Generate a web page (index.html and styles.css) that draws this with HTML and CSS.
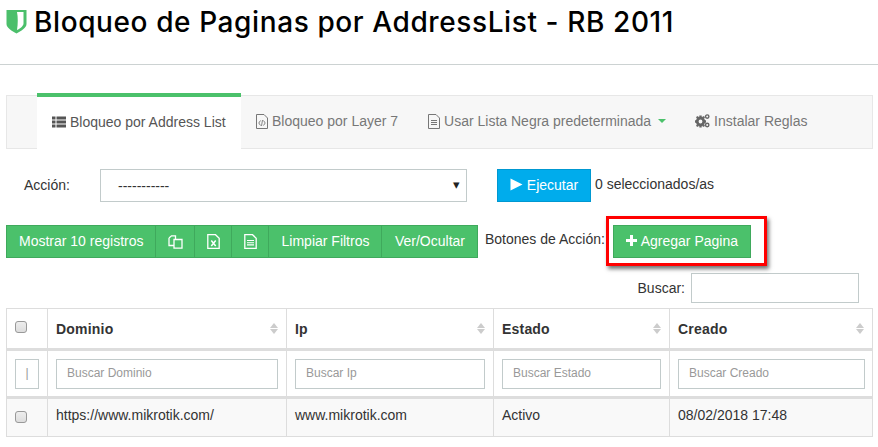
FILE: index.html
```html
<!DOCTYPE html>
<html lang="es">
<head>
  <meta charset="UTF-8">
  <title>Bloqueo de Paginas por AddressList - RB 2011</title>
  <link rel="stylesheet" href="styles.css">
</head>
<body>
  <header class="page-title">
    <svg class="shield" width="21" height="25" viewBox="0 0 21 25">
      <path d="M0.5 1 H20.5 V15 C20.5 19 15 22 10.5 24.5 C6 22 0.5 19 0.5 15 Z" fill="#4bbf6b"/>
      <path d="M11 3 H17.5 V14.5 C17.5 17 14 19.5 11 21 C12 15 12 8 11 3 Z" fill="#fff"/>
    </svg>
    <h1>Bloqueo de Paginas por AddressList - RB 2011</h1>
  </header>

  <nav class="tabs">
    <a class="tab tab-active">
      <svg class="icon" width="14" height="12" viewBox="0 0 14 12" fill="#555">
        <path d="M0 0.5h3.5v3H0zM4.5 0.5H14v3H4.5zM0 4.5h3.5v3H0zM4.5 4.5H14v3H4.5zM0 8.5h3.5v3H0zM4.5 8.5H14v3H4.5z"/>
      </svg>
      Bloqueo por Address List
    </a>
    <a class="tab">
      <svg class="icon" width="12" height="15" viewBox="0 0 12 15" fill="none" stroke="#777">
        <path d="M0.5 0.5H8L11.5 4V14.5H0.5Z"/><path d="M4.5 6.5L2.8 9L4.5 11.5M7.5 6.5L9.2 9L7.5 11.5M6.5 6L5.5 12" stroke-width="0.9"/>
      </svg>
      Bloqueo por Layer 7
    </a>
    <a class="tab">
      <svg class="icon" width="12" height="15" viewBox="0 0 12 15" fill="none" stroke="#777">
        <path d="M0.5 0.5H8L11.5 4V14.5H0.5Z"/><path d="M3 6.5H9M3 8.5H9M3 10.5H9"/>
      </svg>
      Usar Lista Negra predeterminada <span class="caret"></span>
    </a>
    <a class="tab tab-last">
      <svg class="icon" width="15" height="14" viewBox="0 0 15 14" fill="#666">
        <circle cx="5.5" cy="7.5" r="3.3" fill="none" stroke="#666" stroke-width="2.8"/>
        <path d="M4.3 1.5h2.4v2.4H4.3zM4.3 11.1h2.4v2.4H4.3zM0 6.3h2.4v2.4H0zM8.6 6.3H11v2.4H8.6zM1 3l2-1 1 2-2 1zM7 11l2-1 1 2-2 1zM1 12l1-2 2 1-1 2zM7 4l1-2 2 1-1 2z"/>
        <circle cx="12.2" cy="2.6" r="1.7" fill="none" stroke="#666" stroke-width="1.4"/>
        <circle cx="12.2" cy="11" r="1.7" fill="none" stroke="#666" stroke-width="1.4"/>
      </svg>
      Instalar Reglas
    </a>
  </nav>

  <form class="action-row">
    <label class="action-label">Acción:</label>
    <div class="fake-select">-----------<span class="select-arrow">▾</span></div>
    <button type="button" class="btn btn-blue">
      <svg class="icon" width="13" height="13" viewBox="0 0 13 13" fill="#fff"><path d="M0.5 0.5L12.5 6.5L0.5 12.5Z"/></svg>
      Ejecutar
    </button>
    <span class="selected-count">0 seleccionados/as</span>
  </form>

  <div class="toolbar">
    <div class="btn-group">
      <button type="button" class="btn btn-green btn-grouped">Mostrar 10 registros</button>
      <button type="button" class="btn btn-green btn-grouped btn-icon btn-copy">
        <svg width="15" height="14" viewBox="0 0 15 14" fill="none" stroke="#fff" stroke-width="1.3">
          <path d="M1 3L3.5 0.8H7.5V4M1 3V10.5H5.5M6 4.5H14V13.2H6Z"/>
        </svg>
      </button>
      <button type="button" class="btn btn-green btn-grouped btn-icon">
        <svg width="13" height="15" viewBox="0 0 13 15" fill="none" stroke="#fff" stroke-width="1.3">
          <path d="M0.8 0.7H8.5L12.2 4.2V14.3H0.8Z"/><path d="M4.3 6.5L8.7 12M8.7 6.5L4.3 12" stroke-width="1.5"/>
        </svg>
      </button>
      <button type="button" class="btn btn-green btn-grouped btn-icon">
        <svg width="13" height="15" viewBox="0 0 13 15" fill="none" stroke="#fff" stroke-width="1.3">
          <path d="M0.8 0.7H8.5L12.2 4.2V14.3H0.8Z"/><path d="M3 6.5H10M3 8.7H10M3 10.9H10" stroke-width="1.1"/>
        </svg>
      </button>
      <button type="button" class="btn btn-green btn-grouped btn-clear">Limpiar Filtros</button>
      <button type="button" class="btn btn-green btn-grouped btn-toggle">Ver/Ocultar</button>
    </div>
    <span class="toolbar-label">Botones de Acción:</span>
    <div class="highlight">
      <button type="button" class="btn btn-green btn-add">
        <svg class="icon" width="11" height="11" viewBox="0 0 11 11" fill="#fff"><path d="M4 0h3v4h4v3H7v4H4V7H0V4h4z"/></svg>
        Agregar Pagina
      </button>
    </div>
  </div>

  <div class="search-row">
    <label>Buscar:</label>
    <input class="search-input" type="text">
  </div>

  <table class="data-table">
    <colgroup>
      <col class="col-check"><col class="col-domain"><col class="col-ip"><col class="col-state"><col>
    </colgroup>
    <thead>
      <tr class="head-row">
        <th><span class="check"></span></th>
        <th>Dominio<span class="sort"></span></th>
        <th>Ip<span class="sort"></span></th>
        <th>Estado<span class="sort"></span></th>
        <th>Creado<span class="sort"></span></th>
      </tr>
      <tr class="filter-row">
        <td><input class="filter-input filter-small" type="text" placeholder="|"></td>
        <td><input class="filter-input" type="text" placeholder="Buscar Dominio"></td>
        <td><input class="filter-input" type="text" placeholder="Buscar Ip"></td>
        <td><input class="filter-input" type="text" placeholder="Buscar Estado"></td>
        <td><input class="filter-input" type="text" placeholder="Buscar Creado"></td>
      </tr>
    </thead>
    <tbody>
      <tr class="data-row">
        <td><span class="check"></span></td>
        <td>https://www.mikrotik.com/</td>
        <td>www.mikrotik.com</td>
        <td>Activo</td>
        <td>08/02/2018 17:48</td>
      </tr>
    </tbody>
  </table>
</body>
</html>
```

FILE: styles.css
```css
* {
  box-sizing: border-box;
}

html, body {
  height: 447px;
  overflow: hidden;
}

body {
  margin: 0;
  font-family: "Liberation Sans", Arial, sans-serif;
  font-size: 14px;
  color: #333;
  background: #fff;
}

.page-title {
  display: flex;
  align-items: flex-start;
  gap: 7px;
  height: 65px;
  padding: 8px 0 0 6px;
  border-bottom: 1px solid #ccd2d2;
}

.shield {
  margin-top: 1px;
}

.page-title h1 {
  margin: 0;
  font-family: Inter, sans-serif;
  font-size: 28px;
  font-weight: 500;
  line-height: 28px;
  letter-spacing: 0.6px;
  color: #000;
  white-space: nowrap;
}

.tabs {
  display: flex;
  height: 54px;
  margin: 30px 5px 0 6px;
  padding-left: 30px;
  background: #f7f7f7;
  border: 1px solid #e7e7e7;
  color: #777;
}

.tab {
  display: flex;
  align-items: center;
  gap: 4px;
  padding: 0 15px 2px;
  white-space: nowrap;
}

.tab-active {
  width: 204px;
  height: 56px;
  margin-top: -3px;
  background: #fff;
  border-top: 4px solid #4bc16b;
  color: #555;
}

.tab-last {
  margin-left: -1px;
}

.caret {
  width: 0;
  height: 0;
  margin-left: 3px;
  border-top: 4px solid #4bc16b;
  border-left: 4px solid transparent;
  border-right: 4px solid transparent;
}

.action-row {
  display: flex;
  align-items: flex-start;
  height: 33px;
  margin-top: 20px;
  padding-left: 24px;
}

.action-label {
  width: 76px;
  margin-top: 8px;
}

.fake-select {
  position: relative;
  width: 367px;
  height: 33px;
  padding: 8px 17px;
  border: 1px solid #c2cbcb;
  margin-right: 30px;
}

.select-arrow {
  position: absolute;
  right: 6px;
  top: 7px;
  font-size: 13px;
  color: #222;
}

.btn {
  display: inline-flex;
  align-items: center;
  justify-content: center;
  gap: 4px;
  height: 33px;
  padding: 0 0 2px;
  border: 1px solid transparent;
  font-family: inherit;
  font-size: 14px;
  color: #fff;
}

.btn-blue {
  width: 94px;
  background: #00acec;
  border-color: #0098d1;
}

.selected-count {
  margin: 7px 0 0 4px;
}

.toolbar {
  display: flex;
  align-items: flex-start;
  height: 33px;
  margin-top: 23px;
  padding-left: 6px;
}

.btn-group {
  display: flex;
  width: 471px;
}

.btn-green {
  background: #4bc16b;
  border-color: #3fa95c;
}

.btn-grouped {
  flex: none;
  padding: 0 12px 2px;
  margin-left: -1px;
}

.btn-grouped:first-child {
  margin-left: 0;
}

.btn-icon {
  width: 38px;
  padding: 0;
}

.btn-copy {
  width: 40px;
}

.btn-clear {
  width: 114px;
  padding: 0 0 2px;
}

.btn-toggle {
  width: 97px;
  padding: 0 0 2px;
}

.toolbar-label {
  margin: 6px 0 0 8px;
}

.highlight {
  position: relative;
  margin: -9px 0 0 1px;
  padding: 6px 13px 5px 4px;
  border: 3px solid #f00;
  box-shadow: 2px 3px 4px rgba(0, 0, 0, 0.55);
}

.btn-add {
  width: 138px;
}

.search-row {
  display: flex;
  align-items: center;
  justify-content: flex-end;
  gap: 6px;
  height: 30px;
  margin-top: 15px;
  padding-right: 19px;
}

.search-input {
  width: 168px;
  height: 30px;
  border: 1px solid #c2cbcb;
}

.data-table {
  width: 867px;
  margin: 5px 0 0 6px;
  table-layout: fixed;
  border-collapse: collapse;
}

.col-check {
  width: 41px;
}

.col-domain {
  width: 239px;
}

.col-ip {
  width: 207px;
}

.col-state {
  width: 176px;
}

.data-table th, .data-table td {
  border: 1px solid #ddd;
  padding: 0 8px;
  text-align: left;
}

.head-row th {
  position: relative;
  height: 41px;
  border-bottom: 3px solid #ddd;
  letter-spacing: 0.2px;
}

.head-row th:first-child {
  padding-bottom: 3px;
}

.filter-row td {
  height: 48px;
  border-bottom: 3px solid #ddd;
}

.filter-row td:last-child {
  padding-right: 7px;
}

.data-row td {
  height: 39px;
  padding-bottom: 5px;
  background: #f9f9f9;
}

.data-row td:first-child {
  padding-bottom: 2px;
}

.check {
  display: block;
  width: 12px;
  height: 12px;
  background: linear-gradient(#eee, #ddd);
  border: 1px solid #999;
  border-radius: 3px;
}

.sort {
  position: absolute;
  right: 8px;
  top: 14px;
  width: 0;
  height: 0;
  border-bottom: 5px solid #ccc;
  border-left: 4px solid transparent;
  border-right: 4px solid transparent;
}

.sort::after {
  content: "";
  position: absolute;
  left: -4px;
  top: 6px;
  border-top: 5px solid #ccc;
  border-left: 4px solid transparent;
  border-right: 4px solid transparent;
}

.filter-input {
  display: block;
  width: 100%;
  height: 30px;
  padding: 0 10px 2px;
  border: 1px solid #c2cbcb;
  font-family: inherit;
  font-size: 12px;
}

.filter-input::placeholder {
  color: #999;
}

.filter-small {
  width: 24px;
  padding: 0 0 2px;
  text-align: center;
}
```
